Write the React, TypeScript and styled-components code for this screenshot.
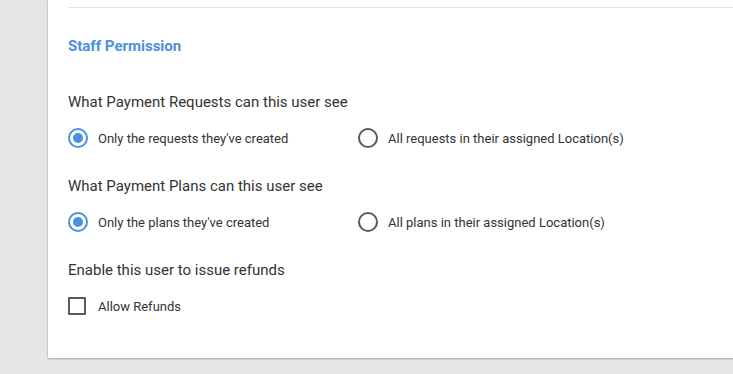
import React from "react";
import styled, { createGlobalStyle } from "styled-components";

const Global = createGlobalStyle`
  html, body { margin: 0; padding: 0; overflow: hidden; }
  body { background: #e6e6e6; font-family: Roboto, "Liberation Sans", Arial, sans-serif; }
`;

const Page = styled.div`
  padding-left: 48px;
  height: 374px;
  box-sizing: border-box;
`;

const Card = styled.div`
  background: #fff;
  width: 720px;
  padding: 7px 20px 42px 20px;
  box-sizing: border-box;
  box-shadow: 0 1px 2px rgba(0, 0, 0, 0.25), 0 0 2px rgba(0, 0, 0, 0.12);
`;

const Divider = styled.div`
  height: 1px;
  background: #e2e2e2;
  margin-right: -20px;
`;

const SectionTitle = styled.div`
  margin-top: 28px;
  font-size: 15px;
  line-height: 20px;
  font-weight: 700;
  color: #4a90e2;
`;

const Group = styled.div<{ $first?: boolean }>`
  margin-top: ${(p) => (p.$first ? "36px" : "28px")};
`;

const Question = styled.div`
  font-size: 15px;
  line-height: 20px;
  color: #333;
`;

const Options = styled.div`
  margin-top: 16px;
  display: grid;
  grid-template-columns: 290px auto;
  height: 20px;
`;

const Option = styled.label`
  display: flex;
  align-items: center;
  gap: 10px;
  font-size: 13px;
  color: #333;
  height: 20px;
`;

const Radio = styled.span<{ $checked?: boolean }>`
  width: 20px;
  height: 20px;
  box-sizing: border-box;
  border-radius: 50%;
  border: 2px solid ${(p) => (p.$checked ? "#4a90e2" : "#5a5a5a")};
  display: flex;
  align-items: center;
  justify-content: center;
  &::after {
    content: "";
    display: ${(p) => (p.$checked ? "block" : "none")};
    width: 10px;
    height: 10px;
    border-radius: 50%;
    background: #4a90e2;
  }
`;

const Box = styled.span`
  width: 18px;
  height: 18px;
  margin: 1px 2px 1px 0;
  box-sizing: border-box;
  border: 2px solid #5a5a5a;
  border-radius: 1px;
`;

const CheckRow = styled.div`
  margin-top: 16px;
`;

export default function App() {
  return (
    <>
      <Global />
      <Page>
        <Card>
          <Divider />
          <SectionTitle>Staff Permission</SectionTitle>
          <Group $first>
            <Question>What Payment Requests can this user see</Question>
            <Options>
              <Option>
                <Radio $checked />
                Only the requests they've created
              </Option>
              <Option>
                <Radio />
                All requests in their assigned Location(s)
              </Option>
            </Options>
          </Group>
          <Group>
            <Question>What Payment Plans can this user see</Question>
            <Options>
              <Option>
                <Radio $checked />
                Only the plans they've created
              </Option>
              <Option>
                <Radio />
                All plans in their assigned Location(s)
              </Option>
            </Options>
          </Group>
          <Group>
            <Question>Enable this user to issue refunds</Question>
            <CheckRow>
              <Option>
                <Box />
                Allow Refunds
              </Option>
            </CheckRow>
          </Group>
        </Card>
      </Page>
    </>
  );
}
